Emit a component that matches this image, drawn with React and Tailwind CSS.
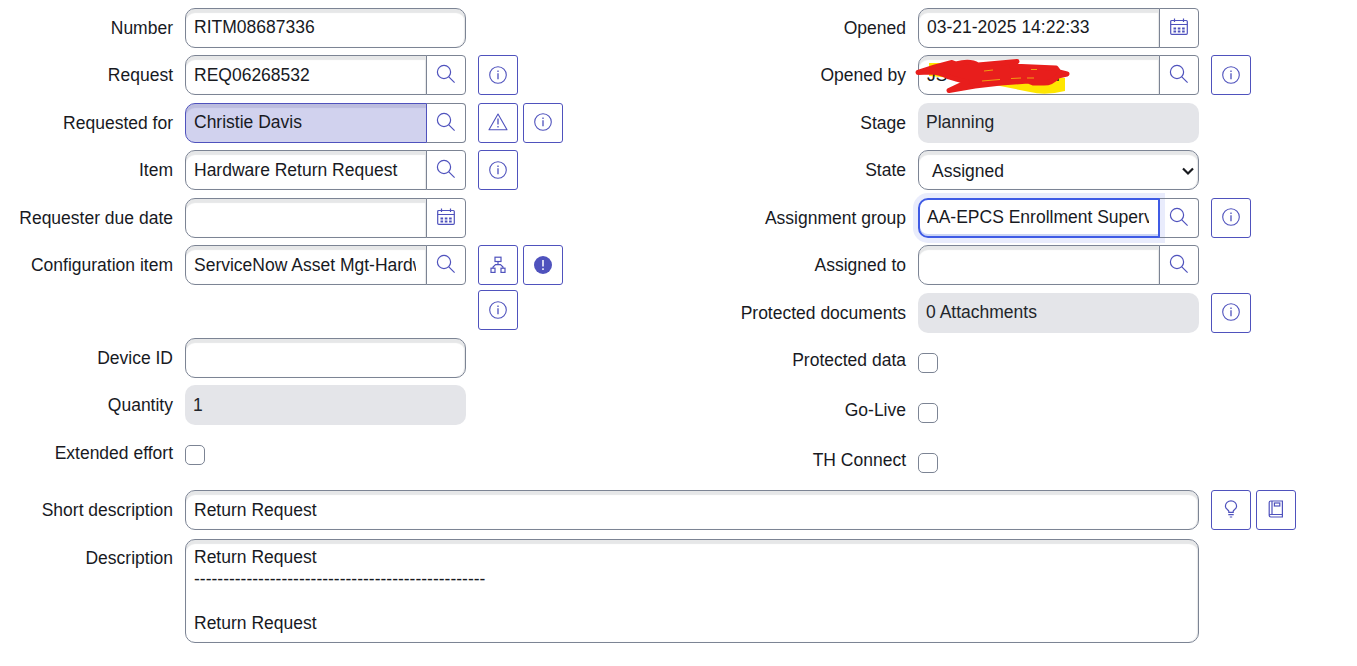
import React from "react";

const field =
  "h-10 bg-white text-[17.5px] text-[#181a1f] whitespace-nowrap overflow-hidden";
const plain = "border border-[#7c8494] pl-2 pr-2.5 pt-[0.5px] leading-[36px]";
const inset = "shadow-[inset_0_4px_1px_#e6e7e8,inset_-1px_0_1px_#e6e7e8]";

function SearchIcon() {
  return (
    <svg width="20" height="20" viewBox="0 0 20 20" fill="none" stroke="#4f52bd" strokeWidth="1.2">
      <circle cx="8" cy="8" r="6.6" />
      <path d="M12.8 12.8L18.6 18.6" />
    </svg>
  );
}

function CalendarIcon() {
  return (
    <svg width="18" height="18" viewBox="0 0 18 18" fill="none" stroke="#4f52bd" strokeWidth="1.2">
      <rect x="0.7" y="2.5" width="16.6" height="13.8" rx="1" />
      <path d="M0.7 6.5H17.3M4.5 0.5V4M13.5 0.5V4" />
      <path d="M3.5 10.5H14.8M3.5 13.5H14.8" strokeWidth="2" strokeDasharray="2.6 1.7" />
    </svg>
  );
}

function InfoIcon() {
  return (
    <svg width="18" height="18" viewBox="0 0 18 18" fill="none" stroke="#4f52bd" strokeWidth="1.1">
      <circle cx="9" cy="9" r="8.3" />
      <path d="M9 7.3V13.2M9 4.6V6" strokeWidth="1.3" />
    </svg>
  );
}

function WarnIcon() {
  return (
    <svg width="20" height="18" viewBox="0 0 20 18" fill="none" stroke="#4f52bd" strokeWidth="1.1" strokeLinejoin="round">
      <path d="M10 1L19 16.8H1Z" />
      <path d="M10 5.5V11.5M10 13V14.4" strokeWidth="1.3" />
    </svg>
  );
}

function TreeIcon() {
  return (
    <svg width="16" height="18" viewBox="0 0 16 18" fill="none" stroke="#4f52bd" strokeWidth="1.2">
      <rect x="5" y="1.2" width="6" height="4.3" />
      <rect x="1" y="12.2" width="4" height="4.2" />
      <rect x="11" y="12.2" width="4" height="4.2" />
      <path d="M8 5.5V8.6M3 12.2V11L5.5 8.6H10.5L13 11V12.2" />
    </svg>
  );
}

function AlertIcon() {
  return (
    <svg width="18" height="18" viewBox="0 0 18 18">
      <circle cx="9" cy="9" r="9" fill="#4f52bd" />
      <path d="M9 4V10.5M9 12.2V14" stroke="#fff" strokeWidth="1.5" />
    </svg>
  );
}

function BulbIcon() {
  return (
    <svg width="14" height="18" viewBox="0 0 14 18" fill="none" stroke="#4f52bd" strokeWidth="1.2">
      <path d="M4.8 12.3V11.3C4.8 10 1.4 9 1.4 6.2A5.6 5.4 0 0 1 12.6 6.2C12.6 9 9.2 10 9.2 11.3V12.3Z" />
      <path d="M4.3 14.6H9.7M5.8 17H8.2" />
    </svg>
  );
}

function BookIcon() {
  return (
    <svg width="16" height="18" viewBox="0 0 16 18" fill="none" stroke="#4f52bd" strokeWidth="1.2">
      <path d="M14.4 14.5V1H2.8Q1.2 1 1.2 2.6V15.6Q1.2 17 2.8 17H14.4V14.5H2.8Q1.2 14.5 1.2 15.8M4 1V14.5" />
      <rect x="6.4" y="3" width="5.4" height="3" />
    </svg>
  );
}

function IconButton({ children }) {
  return (
    <button className="flex h-10 w-10 shrink-0 items-center justify-center rounded-[3px] border border-[#4f52bd] bg-white pb-px">
      {children}
    </button>
  );
}

function Row({ label, children, className = "h-[47.5px]" }) {
  return (
    <div className={`flex items-start ${className}`}>
      <label className="w-[185px] shrink-0 pr-3 text-right text-[17.5px] leading-10 text-[#181a1f]">
        {label}
      </label>
      {children}
    </div>
  );
}

function Input({ value }) {
  return <div className={`w-[281px] rounded-[10px] ${field} ${plain} ${inset}`}>{value}</div>;
}

function ReadOnly({ value }) {
  return (
    <div className="h-10 w-[281px] rounded-[10px] bg-[#e4e5e9] px-2 pt-[0.5px] text-[17.5px] leading-[38px] text-[#22252b]">
      {value}
    </div>
  );
}

function Lookup({ value, icon = <SearchIcon />, state, children }) {
  let look = `${field} ${plain} ${inset}`;
  if (state === "selected")
    look =
      "h-10 border border-[#4f52bd] bg-[#d1d2ee] pl-2 pr-2.5 text-[17.5px] leading-[36.5px] text-[#181a1f] shadow-[inset_0_4px_1px_#bcbdde]";
  if (state === "focus")
    look = `${field} border-2 border-[#3f5be5] pl-[7px] pr-[9px] leading-[34px] shadow-[0_0_0_5px_#e9ecfc,inset_0_-2px_0_#cbd5f5]`;

  let divider = "border-l-[#7c8494] bg-white";
  if (state === "selected") divider = "border-l-[#4f52bd] bg-white";
  if (state === "focus") divider = "border-l-[#3f5be5] bg-transparent";

  return (
    <div className="relative flex w-[281px] shrink-0">
      <div className={`w-[242px] shrink-0 rounded-l-[10px] ${look}`}>{value}</div>
      <button
        className={`-ml-px flex h-10 w-10 shrink-0 items-center justify-center rounded-r-[4px] border border-y-[#7c8494] border-r-[#7c8494] pb-0.5 ${divider}`}
      >
        {icon}
      </button>
      {children}
    </div>
  );
}

function Actions({ children }) {
  return <div className="ml-3 flex w-[90px] flex-wrap gap-[5px]">{children}</div>;
}

function Checkbox({ className = "mt-3" }) {
  return <div className={`h-5 w-5 rounded-[5px] border border-[#7c8494] bg-white ${className}`} />;
}

// marker strokes hiding the name
function Scribble() {
  return (
    <svg className="absolute -left-1 top-0 z-10" width="160" height="42" viewBox="914 55 160 42" fill="none">
      <path d="M929 63H958L1065 78V91Q1045 96 1030 92L1000 86L975 80L929 76Z" fill="#ffe600" />
      <text x="927" y="81" fill="#181a1f" fontSize="17.5">JS</text>
      <text x="1050" y="81" fill="#181a1f" fontSize="17.5">n</text>
      <path
        d="M918 72.5L935 67L952 62.500L956 64Q970 60 978 65L1017 61.500L1012 66L1056 68L1059 72L1067 74L1058 76Q1052 83 1044 83H1033L1028 81L1001 83L975 86L949 90.500L967 82Q955 79 949 77Q940 72 930 72Z"
        fill="#e81e1c"
        stroke="#e81e1c"
        strokeWidth="5"
        strokeLinejoin="round"
        strokeLinecap="round"
      />
      <path d="M984 71L993 70M982 81L1000 79.500M1011 78.500L1021 78M1027 78H1034M1031 69.500H1037" stroke="#f0a010" />
    </svg>
  );
}

export default function App() {
  return (
    <div className="h-[666px] w-[1357px] overflow-hidden bg-white pt-[7.75px] font-['Liberation_Sans',Arial,sans-serif]">
      <div className="flex h-[482px]">
        <div className="w-[733px]">
          <Row label="Number">
            <Input value="RITM08687336" />
          </Row>
          <Row label="Request">
            <Lookup value="REQ06268532" />
            <Actions>
              <IconButton><InfoIcon /></IconButton>
            </Actions>
          </Row>
          <Row label="Requested for">
            <Lookup value="Christie Davis" state="selected" />
            <Actions>
              <IconButton><WarnIcon /></IconButton>
              <IconButton><InfoIcon /></IconButton>
            </Actions>
          </Row>
          <Row label="Item">
            <Lookup value="Hardware Return Request" />
            <Actions>
              <IconButton><InfoIcon /></IconButton>
            </Actions>
          </Row>
          <Row label="Requester due date">
            <Lookup value="" icon={<CalendarIcon />} />
          </Row>
          <Row label="Configuration item" className="h-[92.5px]">
            <Lookup value={<div className="overflow-hidden">ServiceNow Asset Mgt-Hardware</div>} />
            <Actions>
              <IconButton><TreeIcon /></IconButton>
              <IconButton><AlertIcon /></IconButton>
              <IconButton><InfoIcon /></IconButton>
            </Actions>
          </Row>
          <Row label="Device ID">
            <Input value="" />
          </Row>
          <Row label="Quantity">
            <ReadOnly value="1" />
          </Row>
          <Row label="Extended effort">
            <Checkbox />
          </Row>
        </div>

        <div className="w-[624px]">
          <Row label="Opened">
            <Lookup value="03-21-2025 14:22:33" icon={<CalendarIcon />} />
          </Row>
          <Row label="Opened by">
            <Lookup value="">
              <Scribble />
            </Lookup>
            <Actions>
              <IconButton><InfoIcon /></IconButton>
            </Actions>
          </Row>
          <Row label="Stage">
            <ReadOnly value="Planning" />
          </Row>
          <Row label="State">
            <div className={`flex w-[281px] items-center justify-between rounded-[10px] ${field} ${plain} ${inset}`}>
              <span className="pl-[5px]">Assigned</span>
              <svg className="-mr-1.5 mt-px" width="12" height="9" viewBox="0 0 12 9" fill="none" stroke="#181a1f" strokeWidth="2.2">
                <path d="M1 1.500L6 6.500L11 1.500" />
              </svg>
            </div>
          </Row>
          <Row label="Assignment group">
            <Lookup value={<div className="overflow-hidden">AA-EPCS Enrollment Supervisors</div>} state="focus" />
            <Actions>
              <IconButton><InfoIcon /></IconButton>
            </Actions>
          </Row>
          <Row label="Assigned to">
            <Lookup value="" />
          </Row>
          <Row label="Protected documents">
            <ReadOnly value="0 Attachments" />
            <Actions>
              <IconButton><InfoIcon /></IconButton>
            </Actions>
          </Row>
          <Row label="Protected data" className="h-[50px]">
            <Checkbox className="mt-[13px]" />
          </Row>
          <Row label="Go-Live" className="h-[50px]">
            <Checkbox className="mt-[13px]" />
          </Row>
          <Row label="TH Connect" className="h-[50px]">
            <Checkbox className="mt-[13px]" />
          </Row>
        </div>
      </div>

      <Row label="Short description" className="h-[49px]">
        <div className={`w-[1014px] rounded-[10px] ${field} ${plain} ${inset}`}>
          <div className="pt-[0.5px]">Return Request</div>
        </div>
        <Actions>
          <IconButton><BulbIcon /></IconButton>
          <IconButton><BookIcon /></IconButton>
        </Actions>
      </Row>
      <Row label={<div className="-mt-px">Description</div>} className="h-[104px]">
        <div
          className={`h-[104px] w-[1014px] rounded-[10px] border border-[#7c8494] px-2 pt-1.5 text-[17.5px] leading-[22px] text-[#181a1f] whitespace-pre-line ${inset}`}
        >
          {"Return Request\n" + "-".repeat(50) + "\n\nReturn Request"}
        </div>
      </Row>
    </div>
  );
}
